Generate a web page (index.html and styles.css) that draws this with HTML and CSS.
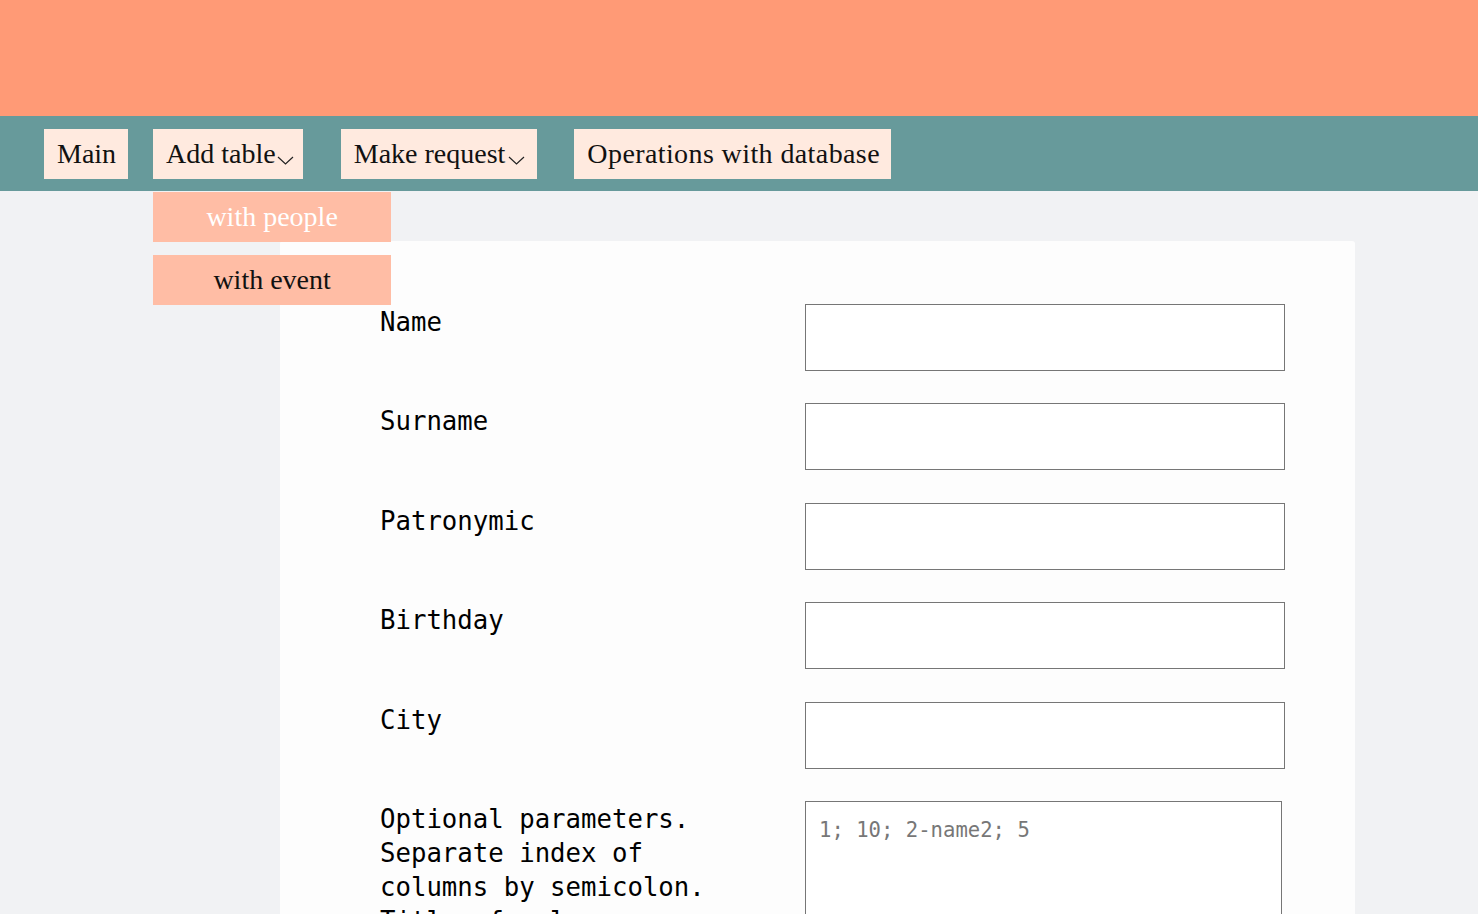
FILE: index.html
```html
<!DOCTYPE html>
<html lang="en">
<head>
<meta charset="utf-8">
<title>Add table</title>
<link rel="stylesheet" href="styles.css">
</head>
<body>
<header class="top-banner"></header>
<nav class="menu">
  <div class="nav-item"><button class="nav-btn">Main</button></div>
  <div class="nav-item nav-dropdown">
    <button class="nav-btn has-caret">Add table<svg class="caret" width="17" height="9" viewBox="0 0 17 9"><path d="M1 1 L8.5 8 L16 1" fill="none" stroke="#222" stroke-width="1.2"/></svg></button>
    <div class="dropdown-menu">
      <a class="dropdown-link is-active" href="#">with people</a>
      <a class="dropdown-link" href="#">with event</a>
    </div>
  </div>
  <div class="nav-item nav-dropdown">
    <button class="nav-btn has-caret wide-caret">Make request<svg class="caret" width="17" height="9" viewBox="0 0 17 9"><path d="M1 1 L8.5 8 L16 1" fill="none" stroke="#222" stroke-width="1.2"/></svg></button>
  </div>
  <div class="nav-item nav-wide"><button class="nav-btn spaced">Operations with database</button></div>
</nav>
<main class="page">
  <form class="card">
    <div class="row"><label class="field-label">Name</label><input class="field-input" type="text"></div>
    <div class="row"><label class="field-label">Surname</label><input class="field-input" type="text"></div>
    <div class="row"><label class="field-label">Patronymic</label><input class="field-input" type="text"></div>
    <div class="row"><label class="field-label">Birthday</label><input class="field-input" type="text"></div>
    <div class="row"><label class="field-label">City</label><input class="field-input" type="text"></div>
    <div class="row"><label class="field-label">Optional parameters. Separate index of columns by semicolon. Title of columns.</label><textarea class="field-area" placeholder="1; 10; 2-name2; 5"></textarea></div>
  </form>
</main>
</body>
</html>
```

FILE: styles.css
```css
html, body {
  margin: 0;
  padding: 0;
}
body {
  background: #f1f2f4;
  font-family: "Liberation Serif", serif;
  overflow: hidden;
  height: 914px;
}
.top-banner {
  height: 116px;
  background: #ff9a76;
}
.menu {
  background: #679a9b;
  height: 75px;
  box-sizing: border-box;
  padding: 13px 0 12px 44px;
  display: flex;
  align-items: flex-start;
}
.nav-item {
  position: relative;
  margin-right: 25px;
}
.nav-dropdown + .nav-dropdown {
  margin-left: 13px;
}
.nav-dropdown + .nav-wide {
  margin-left: 12px;
}
.nav-btn {
  height: 50px;
  border: none;
  background: #ffeadf;
  font-family: "Liberation Serif", serif;
  font-size: 28px;
  color: #111;
  padding: 0 12px 0 13px;
  display: flex;
  align-items: center;
  cursor: pointer;
}
.nav-btn.spaced {
  letter-spacing: 0.4px;
  padding-right: 11px;
}
.has-caret {
  padding-right: 9px;
}
.has-caret.wide-caret {
  padding-right: 12px;
}
.caret {
  margin-left: 1px;
  margin-top: 12px;
}
.wide-caret .caret {
  margin-left: 3px;
}
.dropdown-menu {
  position: absolute;
  left: 0;
  top: 63px;
  width: 238px;
  display: flex;
  flex-direction: column;
  gap: 13px;
  z-index: 5;
}
.dropdown-link {
  display: flex;
  align-items: center;
  justify-content: center;
  height: 50px;
  background: #ffbda5;
  font-size: 28px;
  color: #111;
  text-decoration: none;
}
.dropdown-link.is-active {
  color: #ffffff;
}
.page {
  padding: 50px 0 0 280px;
}
.card {
  width: 1075px;
  box-sizing: border-box;
  background: #fdfdfd;
  border-radius: 3px;
  padding: 63px 70px 0 100px;
  min-height: 700px;
}
.row {
  display: flex;
  justify-content: space-between;
  align-items: flex-start;
  margin-bottom: 32.4px;
}
.field-label {
  font-family: "DejaVu Sans Mono", "Liberation Mono", monospace;
  font-size: 25.7px;
  line-height: 34px;
  color: #000;
  width: 340px;
  padding-top: 1px;
}
.field-input {
  width: 480px;
  height: 67px;
  box-sizing: border-box;
  border: 1px solid #767676;
  background: #fff;
  margin: 0;
}
.field-area {
  width: 477px;
  height: 150px;
  box-sizing: border-box;
  border: 1px solid #767676;
  background: #fff;
  margin: 0 3px 0 0;
  padding: 16px 13px;
  font-family: "DejaVu Sans Mono", "Liberation Mono", monospace;
  font-size: 20.6px;
  resize: none;
}
.field-area::placeholder {
  color: #777;
}
```
